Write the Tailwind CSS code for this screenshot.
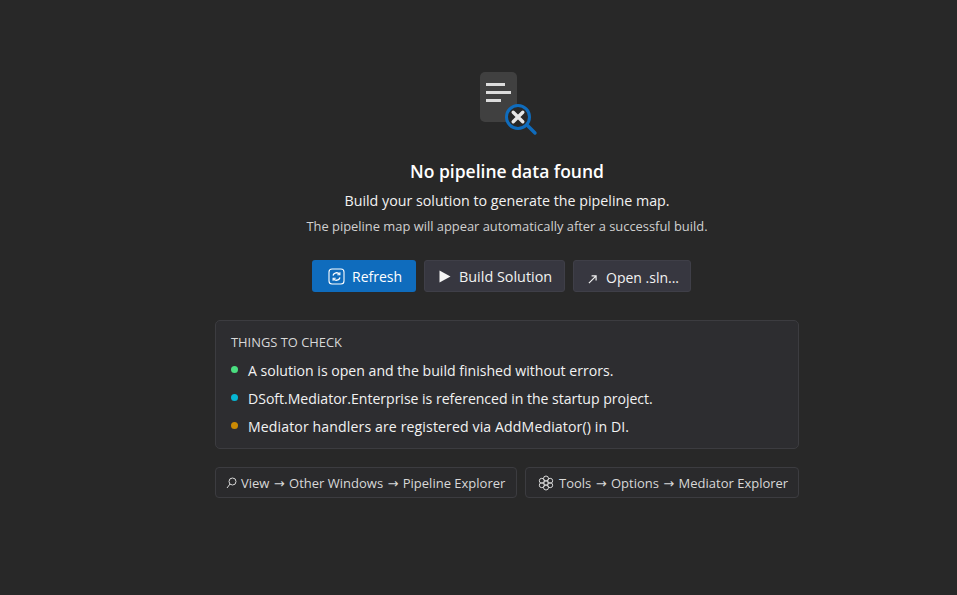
<!DOCTYPE html>
<html lang="en">
<head>
  <meta charset="UTF-8">
  <title>Pipeline Explorer</title>
  <script src="https://cdn.jsdelivr.net/npm/@tailwindcss/browser@4"></script>
</head>
<body class="bg-[#282828] h-[595px] overflow-hidden font-['Open_Sans','Liberation_Sans',sans-serif] text-[#f2f2f2]">
  <div class="w-[584px] ml-[215px] pt-[72px] flex flex-col items-center">
    <!-- Empty state icon -->
    <svg class="w-[60px] h-[64px] ml-[6px]" viewBox="0 0 60 64" fill="none">
      <rect x="0" y="0" width="37" height="50" rx="5" fill="#404040"/>
      <rect x="6" y="11" width="19" height="3" fill="#dcdcdc"/>
      <rect x="6" y="19" width="25" height="3" fill="#dcdcdc"/>
      <rect x="6" y="27" width="15" height="3" fill="#dcdcdc"/>
      <line x1="46" y1="52" x2="55" y2="61" stroke="#0f6cbd" stroke-width="3.4" stroke-linecap="round"/>
      <circle cx="38" cy="45" r="11.5" fill="#282828" stroke="#0f6cbd" stroke-width="3"/>
      <path d="M33.2 40.2 L42.8 49.8 M42.8 40.2 L33.2 49.8" stroke="#e6e6e6" stroke-width="3.4" stroke-linecap="round"/>
    </svg>

    <h1 class="mt-[23px] text-[17.5px] leading-[24px] font-semibold text-white">No pipeline data found</h1>
    <p class="mt-[8px] text-[14.25px] leading-[20px]">Build your solution to generate the pipeline map.</p>
    <p class="mt-[6px] text-[12.9px] leading-[18px] text-[#d0d0d0]">The pipeline map will appear automatically after a successful build.</p>

    <div class="mt-[25px] mr-[11px] flex gap-2 text-[14px]">
      <button class="w-[104px] h-[32px] rounded-[3px] bg-[#0f6cbd] text-white flex items-center pl-[16px] gap-[7px]">
        <svg class="w-[17px] h-[17px]" viewBox="0 0 17 17" fill="none" stroke="#fff">
          <rect x="1" y="1" width="15" height="15" rx="3" stroke-width="1.1"/>
          <path d="M5 7.5 A3.7 3.7 0 0 1 11.5 6.2 M12 9.5 A3.7 3.7 0 0 1 5.5 10.8" stroke-width="1.3"/>
          <path d="M11.9 4.2 V6.8 H9.3 M5.1 12.8 V10.2 H7.7" stroke-width="1.1"/>
        </svg>
        Refresh
      </button>
      <button class="w-[141px] h-[32px] rounded-[3px] bg-[#373740] border border-[#3f3f48] flex items-center pl-[14px] gap-[8px] text-[14.4px]">
        <svg class="w-[12px] h-[13px]" viewBox="0 0 12 13"><path d="M0.5 0.5 L11.5 6.5 L0.5 12.5 Z" fill="#f5f5f5"/></svg>
        <span class="pt-[2px]">Build Solution</span>
      </button>
      <button class="w-[118px] h-[32px] rounded-[3px] bg-[#373740] border border-[#3f3f48] flex items-center pl-[14px] gap-[9px]">
        <svg class="w-[9px] h-[9px] mt-[6px]" viewBox="0 0 10 10" fill="none" stroke="#f0f0f0" stroke-width="1.3"><path d="M1 9 L8.5 1.5 M4 1 H9 V6"/></svg>
        <span class="pt-[2px]">Open .sln...</span>
      </button>
    </div>

    <section class="mt-[28px] w-full h-[129px] rounded-[5px] bg-[#2d2d30] border border-[#3c3c40] pl-[15px] pt-[12px]">
      <h2 class="text-[12.9px] leading-[18px] text-[#d8d8d8]">THINGS TO CHECK</h2>
      <ul class="mt-[10px] flex flex-col gap-[8px] text-[14.1px] leading-[20px]">
        <li class="flex items-center gap-[10px]"><span class="w-[7px] h-[7px] mb-[4px] rounded-full bg-[#4ade80]"></span>A solution is open and the build finished without errors.</li>
        <li class="flex items-center gap-[10px]"><span class="w-[7px] h-[7px] mb-[4px] rounded-full bg-[#06b6d4]"></span><span class="tracking-[-0.03px]">DSoft.Mediator.Enterprise is referenced in the startup project.</span></li>
        <li class="flex items-center gap-[10px]"><span class="w-[7px] h-[7px] mb-[4px] rounded-full bg-[#ca8a04]"></span><span class="tracking-[0.12px]">Mediator handlers are registered via AddMediator() in DI.</span></li>
      </ul>
    </section>

    <div class="mt-[18px] w-full flex gap-2 text-[13px] text-[#d8d8d8]">
      <div class="w-[302px] h-[31px] rounded-[4px] bg-[#2a2a2c] border border-[#3c3c40] flex items-center pl-[10px] gap-[4px]">
        <svg class="w-[11px] h-[12px]" viewBox="0 0 11 12" fill="none" stroke="#d8d8d8" stroke-width="1"><circle cx="6.5" cy="4.5" r="3.5"/><path d="M4 7 L1 11"/></svg>
        <span class="pt-[2px]">View <span class="mx-[1px] font-['DejaVu_Sans']">→</span> Other Windows <span class="mx-[1px] font-['DejaVu_Sans']">→</span> Pipeline Explorer</span>
      </div>
      <div class="w-[274px] h-[31px] rounded-[4px] bg-[#2a2a2c] border border-[#3c3c40] flex items-center pl-[12px] gap-[5px]">
        <svg class="w-[16px] h-[16px]" viewBox="0 0 16 16" fill="none" stroke="#d8d8d8" stroke-width="1"><circle cx="8" cy="8" r="2.2"/><circle cx="8" cy="3.5" r="2.5"/><circle cx="8" cy="12.5" r="2.5"/><circle cx="3.8" cy="5.8" r="2.5"/><circle cx="12.2" cy="5.8" r="2.5"/><circle cx="3.8" cy="10.2" r="2.5"/><circle cx="12.2" cy="10.2" r="2.5"/></svg>
        <span class="pt-[2px]">Tools <span class="mx-[1px] font-['DejaVu_Sans']">→</span> Options <span class="mx-[1px] font-['DejaVu_Sans']">→</span> Mediator Explorer</span>
      </div>
    </div>
  </div>
</body>
</html>
